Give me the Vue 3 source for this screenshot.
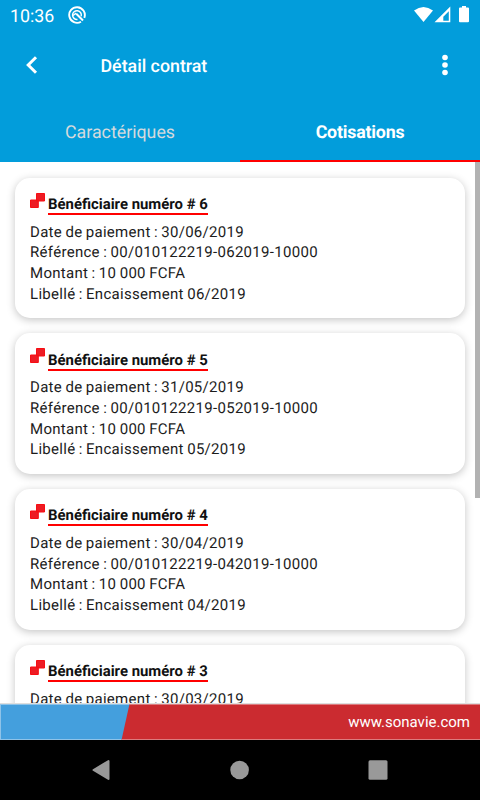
<template>
  <div class="app-container">
    <!-- Barre d'état et titre -->
    <header class="header">
      <div class="status-bar">
        <span class="clock">10:36</span>
        <svg class="status-app" width="18" height="18" viewBox="0 0 18 18">
          <path d="M13 15.700A7.800 7.800 0 1 1 16.300 11.800" fill="none" stroke="#fff" stroke-width="1.900" />
          <path d="M9.500 13.400A4.400 4.400 0 1 1 13.200 10.200" fill="none" stroke="#fff" stroke-width="1.500" />
          <path d="M8.300 7.800L15 14.500" fill="none" stroke="#fff" stroke-width="2" />
          <path d="M5 9.500L8.300 7.200" fill="none" stroke="#fff" stroke-width="1.500" />
        </svg>
        <svg class="status-icons" width="56" height="18" viewBox="0 0 56 18">
          <path d="M0 4.600Q9.500-2.800 19 4.600L9.500 16z" fill="#fff" />
          <path d="M36.300 .5V16.300H20.500zM34.800 5.300L29.300 10.800V14.800H34.800z" fill="#fff" fill-rule="evenodd" />
          <path d="M48 0h4v1.500h2q1 0 1 1V15.200q0 1-1 1h-8q-1 0-1-1V2.500q0-1 1-1h2z" fill="#fff" />
        </svg>
      </div>
      <div class="title-bar">
        <button class="back" aria-label="Retour">
          <svg width="12" height="18" viewBox="0 0 12 18">
            <path d="M10 1.200L2.200 9L10 16.800" fill="none" stroke="#fff" stroke-width="3" />
          </svg>
        </button>
        <h1 class="title">Détail contrat</h1>
        <button class="more" aria-label="Menu">
          <svg width="6" height="22" viewBox="0 0 6 22">
            <circle cx="3" cy="3.500" r="2.800" fill="#fff" />
            <circle cx="3" cy="11" r="2.800" fill="#fff" />
            <circle cx="3" cy="18.500" r="2.800" fill="#fff" />
          </svg>
        </button>
      </div>
      <nav class="tabs">
        <button
          v-for="tab in tabs"
          :key="tab"
          :class="['tab', { active: tab === activeTab }]"
          @click="activeTab = tab"
        >
          <span>{{ tab }}</span>
        </button>
      </nav>
    </header>

    <!-- Liste des cotisations -->
    <main class="list">
      <article v-for="item in cotisations" :key="item.numero" class="card">
        <div class="card-head">
          <svg class="logo" width="15" height="15" viewBox="0 0 15 15">
            <path d="M6.500 .5H14.500V8H8.300V14.500H.5V7H6.500z" fill="#ed1c24" />
            <path d="M6.500 .5H14.500V8H6.500zM.5 7H8.300V14.500H.5z" fill="none" stroke="#f80d12" />
          </svg>
          <h2>Bénéficiaire numéro # {{ item.numero }}</h2>
        </div>
        <p>Date de paiement : {{ item.date }}</p>
        <p>Référence : {{ item.reference }}</p>
        <p>Montant : {{ item.montant }}</p>
        <p>Libellé : {{ item.libelle }}</p>
      </article>
      <div class="scrollbar"></div>
    </main>

    <footer class="footer">
      <svg class="footer-bg" width="480" height="37" viewBox="0 0 480 37">
        <path d="M0 1H480V37H0z" fill="#cb2b30" />
        <path d="M0 1H129.500L121.500 37H0z" fill="#449fdd" />
        <path d="M0 .5H480" stroke="#dedede" />
        <path d="M0 1.500H129.500M.5 1V37M0 36.500H121.500" stroke="#8fc3e8" />
        <path d="M129.500 1.500H480M121.500 36.500H480" stroke="#dc7b7e" />
      </svg>
      <span class="site">www.sonavie.com</span>
    </footer>

    <!-- Navigation système -->
    <div class="system-nav">
      <svg width="20" height="22" viewBox="0 0 20 22">
        <path d="M17.500 2V20L2.500 11z" fill="#999" stroke="#999" stroke-width="2" stroke-linejoin="round" />
      </svg>
      <svg width="20" height="22" viewBox="0 0 20 22">
        <circle cx="10.600" cy="11" r="9.300" fill="#999" />
      </svg>
      <svg width="20" height="22" viewBox="0 0 20 22">
        <rect x=".5" y="1.200" width="19" height="19.500" rx="1.500" fill="#999" />
      </svg>
    </div>
  </div>
</template>

<script setup>
import { ref } from 'vue'

const tabs = ['Caractériques', 'Cotisations']
const activeTab = ref('Cotisations')

const cotisations = ref([
  { numero: 6, date: '30/06/2019', reference: '00/010122219-062019-10000', montant: '10 000 FCFA', libelle: 'Encaissement 06/2019' },
  { numero: 5, date: '31/05/2019', reference: '00/010122219-052019-10000', montant: '10 000 FCFA', libelle: 'Encaissement 05/2019' },
  { numero: 4, date: '30/04/2019', reference: '00/010122219-042019-10000', montant: '10 000 FCFA', libelle: 'Encaissement 04/2019' },
  { numero: 3, date: '30/03/2019', reference: '00/010122219-032019-10000', montant: '10 000 FCFA', libelle: 'Encaissement 03/2019' }
])
</script>

<style>
body { background: #fff; overflow: hidden; }
</style>

<style scoped>
.app-container {
  width: 480px;
  height: 800px;
  display: flex;
  flex-direction: column;
  overflow: hidden;
  background: #fff;
  font-family: Roboto, 'Liberation Sans', sans-serif;
  text-rendering: geometricPrecision;
}

svg { display: block; flex: none; }

button {
  padding: 0;
  border: 0;
  background: none;
  color: inherit;
  font: inherit;
  text-rendering: inherit;
}

/* En-tête */
.header {
  flex: none;
  height: 162px;
  box-sizing: border-box;
  display: flex;
  flex-direction: column;
  background: #029ddb;
  color: #fff;
}

.status-bar {
  height: 30px;
  display: flex;
  align-items: center;
  padding: 0 10px;
}

.clock { width: 58px; padding-top: 2px; font-size: 17.800px; }
.status-icons { margin-left: auto; }

.title-bar {
  height: 70px;
  display: flex;
  align-items: center;
  padding: 0 32px 0 26px;
}

.title {
  margin: 4px 0 0 62.500px;
  font-size: 17.800px;
  line-height: 22px;
  font-weight: 500;
}

.more { margin-left: auto; }

.tabs { flex: 1; display: flex; }

.tab {
  flex: 1;
  padding-top: 4px;
  color: #d5dadd;
  font-size: 17.800px;
  border-bottom: 2px solid transparent;
}

.tab.active {
  color: #fff;
  font-weight: 700;
  letter-spacing: -0.2px;
  border-bottom-color: #f00;
}

/* Cartes */
.list {
  flex: none;
  position: relative;
  height: 541px;
  box-sizing: border-box;
  padding: 15.500px 15px 0;
  overflow: hidden;
}

.card {
  height: 140.700px;
  box-sizing: border-box;
  margin-bottom: 15px;
  padding: 15px;
  border-radius: 15px;
  background: #fff;
  box-shadow: 0 2px 8px rgba(0, 0, 0, 0.23);
}

.card-head {
  display: flex;
  align-items: flex-start;
  height: 29px;
}

.card h2 {
  margin: 2.500px 0 0 3px;
  border-bottom: 2px solid #f00;
  color: #111;
  font-size: 14.900px;
  line-height: 18px;
  font-weight: 700;
}

.card p {
  margin: 0;
  color: #1c1c1c;
  font-size: 15px;
  line-height: 20.700px;
  letter-spacing: 0.3px;
  word-spacing: -0.7px;
}

.scrollbar {
  position: absolute;
  top: 0;
  right: 0;
  width: 5px;
  height: 336px;
  background: #b2b2b2;
}

/* Pied de page */
.footer {
  position: relative;
  flex: none;
  height: 37px;
  display: flex;
  align-items: center;
  justify-content: flex-end;
  padding-right: 10px;
}

.footer-bg { position: absolute; top: 0; left: 0; }

.site {
  position: relative;
  color: #fff;
  font-size: 15px;
}

.system-nav {
  flex: 1;
  display: flex;
  justify-content: space-between;
  align-items: center;
  padding: 0 92.500px 0 91px;
  background: #000;
}
</style>
